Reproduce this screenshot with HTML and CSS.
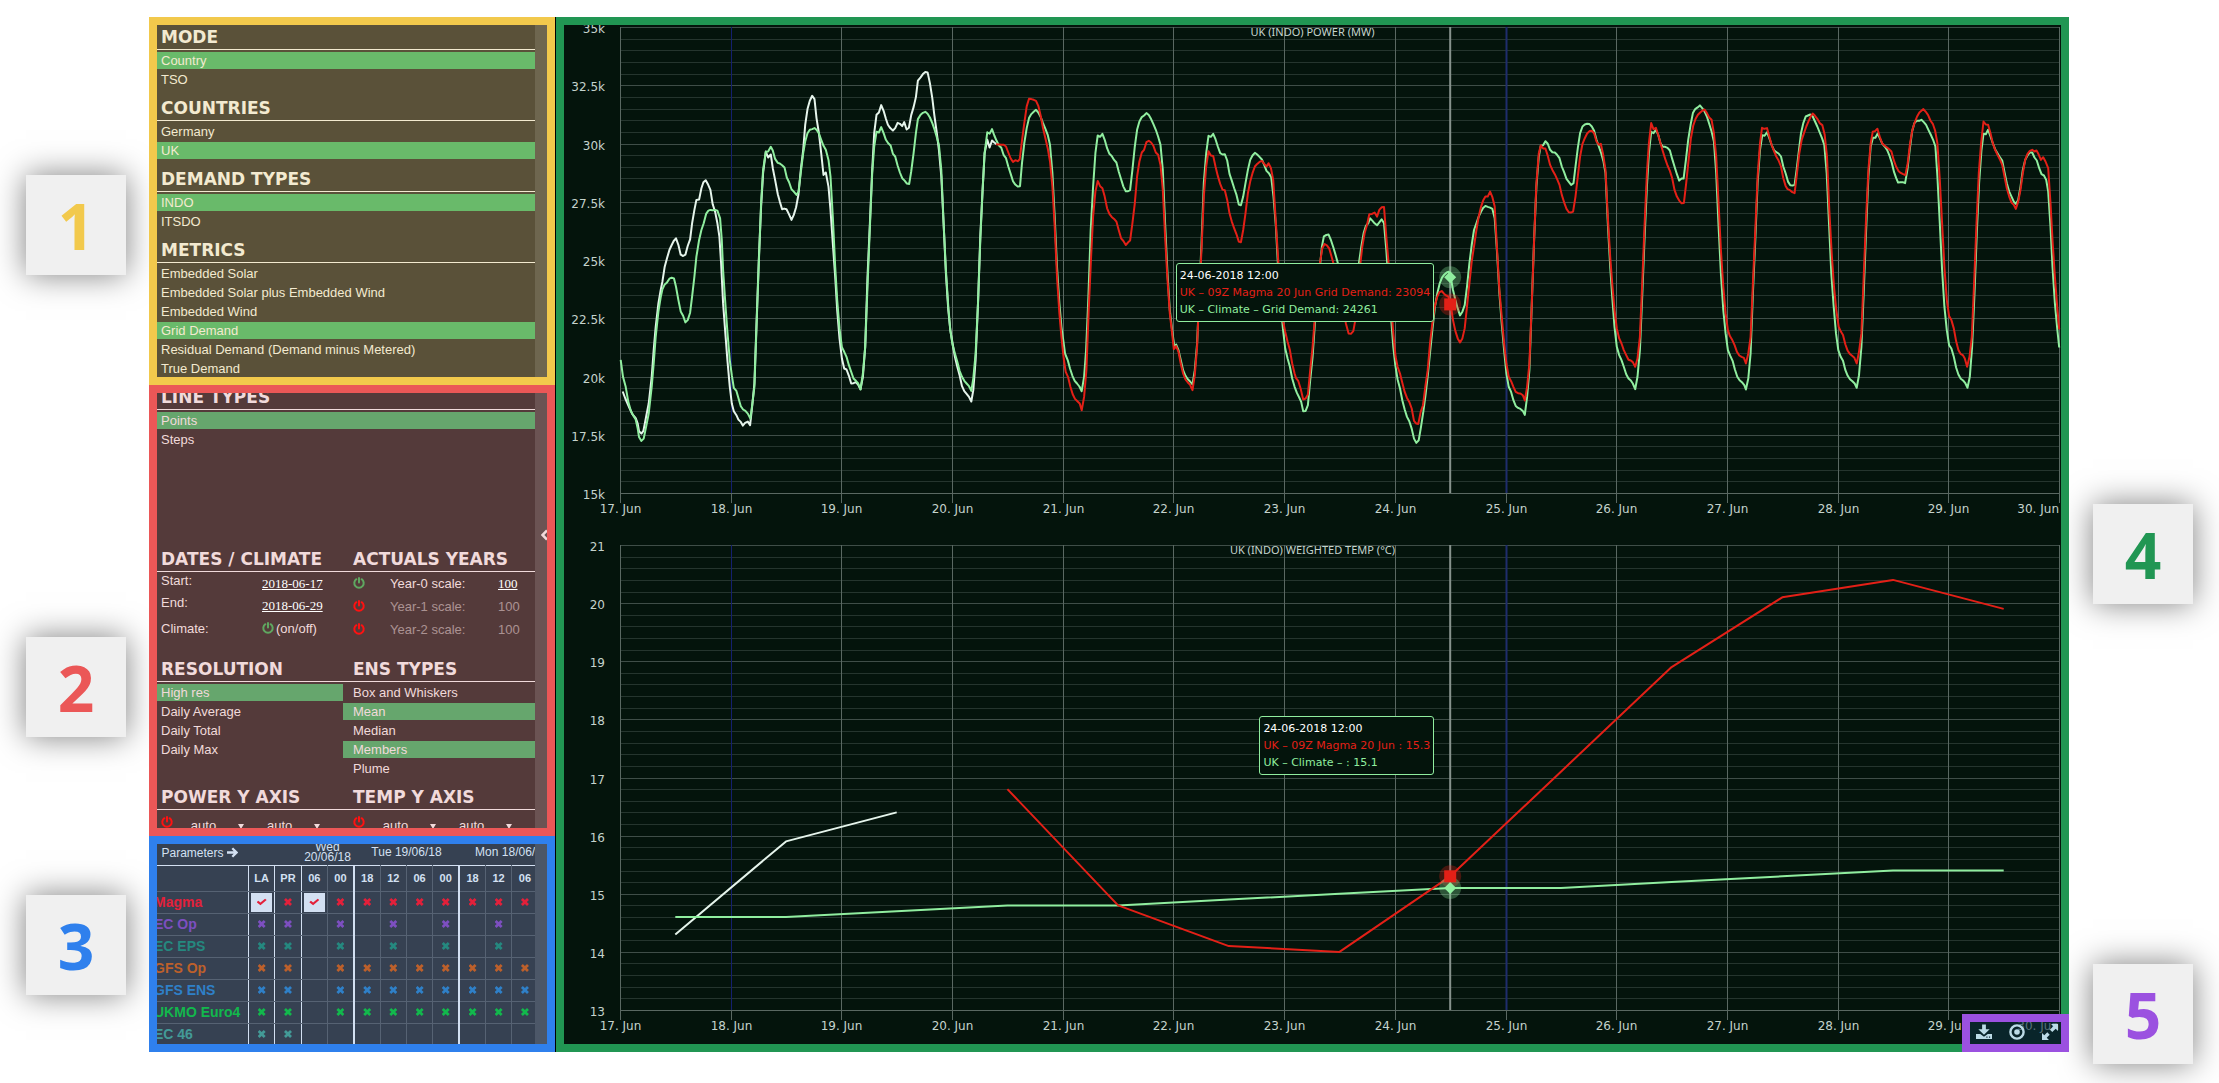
FILE: index.html
```html
<!DOCTYPE html>
<html lang="en">
<head>
<meta charset="utf-8">
<title>UK (INDO) demand forecast</title>
<link rel="stylesheet" href="styles.css">
</head>
<body>
<svg class="sprite" aria-hidden="true">
  <symbol id="power" viewBox="0 0 12 12"><path d="M3.4 2.2a4.7 4.7 0 1 0 5.2 0M6 1v4.6" fill="none" stroke="currentColor" stroke-width="2" stroke-linecap="round"/></symbol>
</svg>
<div class="page">
  <aside class="rail rail-left">
    <div class="badge badge-1">1</div>
    <div class="badge badge-2">2</div>
    <div class="badge badge-3">3</div>
  </aside>

  <main class="app">
    <div class="sidebar">
      <section class="panel panel-yellow">
        <div class="panel-body">
          <div class="group">
            <h2>MODE</h2>
            <button class="item on">Country</button>
            <button class="item">TSO</button>
          </div>
          <div class="group">
            <h2>COUNTRIES</h2>
            <button class="item">Germany</button>
            <button class="item on">UK</button>
          </div>
          <div class="group">
            <h2>DEMAND TYPES</h2>
            <button class="item on">INDO</button>
            <button class="item">ITSDO</button>
          </div>
          <div class="group">
            <h2>METRICS</h2>
            <button class="item">Embedded Solar</button>
            <button class="item">Embedded Solar plus Embedded Wind</button>
            <button class="item">Embedded Wind</button>
            <button class="item on">Grid Demand</button>
            <button class="item">Residual Demand (Demand minus Metered)</button>
            <button class="item">True Demand</button>
          </div>
        </div>
      </section>

      <section class="panel panel-red">
        <div class="panel-body scrolled">
          <div class="group line-types">
            <h2>LINE TYPES</h2>
            <button class="item on">Points</button>
            <button class="item">Steps</button>
          </div>
          <div class="columns">
            <div class="group settings">
              <h2>DATES / CLIMATE</h2>
              <div class="date-row"><span class="raised">Start:</span><a href="#start">2018-06-17</a></div>
              <div class="date-row"><span class="raised">End:</span><a href="#end">2018-06-29</a></div>
              <div class="date-row"><span>Climate:</span><span class="climate"><button class="toggle active" aria-label="Climate"><svg><use href="#power"/></svg></button>(on/off)</span></div>
            </div>
            <div class="group settings">
              <h2>ACTUALS YEARS</h2>
              <div class="year-row current"><button class="toggle active" aria-label="Year-0"><svg><use href="#power"/></svg></button><span>Year-0 scale:</span><a href="#year-0">100</a></div>
              <div class="year-row"><button class="toggle" aria-label="Year-1"><svg><use href="#power"/></svg></button><span>Year-1 scale:</span><span>100</span></div>
              <div class="year-row"><button class="toggle" aria-label="Year-2"><svg><use href="#power"/></svg></button><span>Year-2 scale:</span><span>100</span></div>
            </div>
            <div class="group">
              <h2>RESOLUTION</h2>
              <button class="item on">High res</button>
              <button class="item">Daily Average</button>
              <button class="item">Daily Total</button>
              <button class="item">Daily Max</button>
            </div>
            <div class="group">
              <h2>ENS TYPES</h2>
              <button class="item">Box and Whiskers</button>
              <button class="item on">Mean</button>
              <button class="item">Median</button>
              <button class="item on">Members</button>
              <button class="item">Plume</button>
            </div>
            <div class="group">
              <h2>POWER Y AXIS</h2>
              <div class="axis-row">
                <button class="toggle" aria-label="Power axis"><svg><use href="#power"/></svg></button>
                <label class="select"><select aria-label="Power minimum"><option>auto</option></select></label>
                <label class="select"><select aria-label="Power maximum"><option>auto</option></select></label>
              </div>
            </div>
            <div class="group">
              <h2>TEMP Y AXIS</h2>
              <div class="axis-row">
                <button class="toggle" aria-label="Temperature axis"><svg><use href="#power"/></svg></button>
                <label class="select"><select aria-label="Temperature minimum"><option>auto</option></select></label>
                <label class="select"><select aria-label="Temperature maximum"><option>auto</option></select></label>
              </div>
            </div>
          </div>
        </div>
        <button class="collapse" aria-label="Collapse sidebar"><svg viewBox="0 0 6 12"><path d="M6 1.5 1.5 6 6 10.5" fill="none" stroke="currentColor" stroke-width="2.5"/></svg></button>
      </section>

      <section class="panel panel-blue">
        <div class="panel-body">
          <table class="runs">
            <colgroup><col class="col-name"><col class="col-run"><col class="col-run"><col class="col-run"><col class="col-run"><col class="col-run"><col class="col-run"><col class="col-run"><col class="col-run"><col class="col-run"><col class="col-run"><col class="col-run"><col class="col-run"></colgroup>
            <thead>
              <tr class="days">
                <th class="params" colspan="3">Parameters <svg viewBox="0 0 11 11"><path d="M0 5.5h9M5.3 1.3l4.2 4.2-4.2 4.2" fill="none" stroke="currentColor" stroke-width="2.3"/></svg></th>
                <th colspan="2">Wed<br>20/06/18</th>
                <th colspan="4">Tue 19/06/18</th>
                <th colspan="4">Mon 18/06/18</th>
              </tr>
              <tr class="hours">
                <th class="major"></th><th class="major">LA</th><th class="major">PR</th><th>06</th><th class="day-end">00</th><th>18</th><th>12</th><th>06</th><th class="day-end">00</th><th>18</th><th>12</th><th>06</th><th>00</th>
              </tr>
            </thead>
            <tbody id="runs"></tbody>
          </table>
        </div>
      </section>
    </div>

    <section class="charts">
      <figure class="chart chart-power">
        <svg id="power-chart" class="plot"></svg>
        <div class="tooltip" id="power-tip">
          <div>24-06-2018 12:00</div>
          <div class="forecast">UK – 09Z Magma 20 Jun Grid Demand: 23094</div>
          <div class="climate-line">UK – Climate – Grid Demand: 24261</div>
        </div>
      </figure>
      <figure class="chart chart-temp">
        <svg id="temp-chart" class="plot"></svg>
        <div class="tooltip" id="temp-tip">
          <div>24-06-2018 12:00</div>
          <div class="forecast">UK – 09Z Magma 20 Jun : 15.3</div>
          <div class="climate-line">UK – Climate – : 15.1</div>
        </div>
      </figure>
      <div class="tools">
        <button aria-label="Download"><svg viewBox="0 0 17 16"><path d="M6.5 0h4v5h4l-6 6-6-6h4z"/><path d="M0 10h4.5l4 3 4-3H17v5.5H0z"/><path d="M11 13.4h1.2M13.8 13.4H15" stroke="#0b2530" stroke-width="1.2"/></svg></button>
        <button aria-label="Target"><svg viewBox="0 0 16 16"><circle cx="8" cy="8" r="6.6" fill="none" stroke="currentColor" stroke-width="2.4"/><circle cx="8" cy="8" r="2.8"/></svg></button>
        <button aria-label="Full screen"><svg viewBox="0 0 16 16"><path d="M9 0h7v7l-2.3-2.3-3.4 3.4-2.4-2.4 3.4-3.4zM7 16H0V9l2.3 2.3 3-3 2.4 2.4-3 3z"/></svg></button>
      </div>
    </section>
  </main>

  <aside class="rail rail-right">
    <div class="badge badge-4">4</div>
    <div class="badge badge-5">5</div>
  </aside>
</div>
<script src="charts.js"></script>
</body>
</html>
```

FILE: styles.css
```css
* { box-sizing: border-box; }

body {
  margin: 0;
  background: #fff;
  font: 13px/17px "Liberation Sans", Arial, sans-serif;
}

button, select {
  margin: 0;
  padding: 0;
  border: 0;
  background: none;
  color: inherit;
  font: inherit;
  text-align: left;
}

svg { display: block; fill: currentColor; }
.sprite { position: absolute; width: 0; height: 0; }

.page {
  display: grid;
  grid-template-columns: 149px minmax(0, 1fr) 150px;
  grid-template-rows: minmax(0, 1fr);
  height: 100vh;
  min-height: 700px;
  overflow: hidden;
}

/* numbered badges */
.rail { display: flex; flex-direction: column; }
.rail-left { padding: 175px 0 0 26px; }
.rail-right { padding: 504px 0 0 24px; }
.badge {
  flex: none;
  width: 100px;
  height: 100px;
  background: #f0f0f0;
  box-shadow: 0 0 30px rgba(0, 0, 0, .5);
  font: bold 64px/102px "Open Sans", "Noto Sans", sans-serif;
  text-align: center;
}
.badge-1 { color: #f2c94c; }
.badge-2 { color: #eb5757; margin-top: 362px; }
.badge-3 { color: #2f80ed; margin-top: 158px; }
.badge-4 { color: #219653; }
.badge-5 { color: #9b51e0; margin-top: 360px; }

/* application frame */
.app {
  display: grid;
  grid-template-columns: 406px minmax(0, 1fr);
  grid-template-rows: minmax(0, 1fr);
  gap: 1px;
  min-height: 0;
  margin: 17px 0 31px;
  background: linear-gradient(90deg, #000 415px, transparent 415px);
}
.sidebar {
  display: grid;
  grid-template-rows: minmax(0, 368fr) minmax(0, 451fr) minmax(0, 216fr);
  min-height: 0;
}
.panel { position: relative; border: 8px solid; padding-right: 12px; overflow: hidden; }
.panel-body { height: 100%; overflow: hidden; }
.panel-yellow { border-color: #f2c94c; background: #6e664f; }
.panel-yellow .panel-body { background: #5a5139; color: #f3ead0; }
.panel-yellow .on { background: #69ba6a; }
.panel-red { border-color: #eb5757; background: #6b5353; }
.panel-red .panel-body { background: #543a3a; color: #f1dadb; }
.panel-red .on { background: #66a66d; }
.panel-blue { border-color: #2f80ed; background: #4c5768; }
.panel-blue .panel-body { background: #364152; color: #d3e0f2; }

.group + .group { margin-top: 8px; }
h2 {
  height: 25px;
  margin: 0 0 2px;
  padding-left: 4px;
  border-bottom: 1px solid;
  font: bold 17px/25px "DejaVu Sans", "Arial Black", sans-serif;
  white-space: nowrap;
}
.item { display: block; width: 100%; height: 17px; margin-bottom: 2px; padding-left: 4px; }

.scrolled > .group { margin-top: -8px; }
.line-types { height: 162px; }
.columns { display: grid; grid-template-columns: 186px minmax(0, 1fr); row-gap: 6px; }
.columns .group { margin: 0; }
.columns .group:nth-child(even) > * { padding-left: 10px; }
.settings { height: 104px; }
.settings h2, .axis-row { margin: 0; }

.date-row, .year-row { display: grid; align-items: center; height: 22px; }
.date-row { grid-template-columns: 101px 1fr; padding-left: 4px; }
.date-row:last-child { height: 25px; }
.raised { padding-bottom: 5px; }
.climate { display: flex; gap: 2px; }
.year-row { grid-template-columns: 37px 108px 1fr; height: 23px; }
.year-row span { opacity: .55; }
.year-row.current span { opacity: 1; }
.settings a { justify-self: start; color: #fff; font-family: "Liberation Serif", serif; }
.toggle { color: #f11; }
.toggle.active { color: #5fa760; }
.toggle svg { width: 12px; height: 12px; margin: 2px 0 3px; }

.axis-row { display: flex; height: 36px; padding-left: 4px; }
.axis-row .toggle { width: 31px; height: 20px; }
.select { position: relative; width: 79px; padding-top: 5px; }
.select select { width: 60px; appearance: none; }
.select::after {
  content: "";
  position: absolute;
  top: 12px;
  left: 47px;
  border: 3px solid transparent;
  border-top: 5px solid;
  border-bottom: 0;
}
.collapse { position: absolute; right: 0; top: 136px; color: #f1dadb; }
.collapse svg { width: 6px; height: 12px; }

/* model run table */
.runs { table-layout: fixed; width: 414px; margin: -2px 0 0 -6px; border-collapse: collapse; }
.col-name { width: 97px; }
.runs th, .runs td { padding: 0; text-align: center; overflow: hidden; white-space: nowrap; }
.days { height: 23px; border-bottom: 1px solid #d3e0f2; }
.runs .days th { padding-bottom: 2px; font-size: 12px; line-height: 10px; font-weight: normal; }
.runs .days .params { padding-left: 10px; text-align: left; }
.params svg { display: inline-block; width: 11px; height: 11px; vertical-align: -1px; }
.hours { height: 26px; }
.hours th { border: 1px solid #566273; border-top: 0; font-size: 11px; }
.runs tbody tr { height: 22px; }
.runs tbody th { padding-left: 2px; border: 1px solid #566273; font-size: 14px; text-align: left; }
.runs tbody td { border: 1px solid #566273; }
.runs .major { border-right: 1px solid #d3e0f2; }
.runs .day-end { border-right: 2px solid #d3e0f2; }
.runs input {
  display: grid;
  place-content: center;
  width: 21px;
  height: 19px;
  margin: 0 auto;
  appearance: none;
  color: inherit;
}
.runs input::before {
  content: "";
  width: 8px;
  height: 8px;
  background: currentColor;
  clip-path: polygon(24% 0, 50% 26%, 76% 0, 100% 24%, 74% 50%, 100% 76%, 76% 100%, 50% 74%, 24% 100%, 0 76%, 26% 50%, 0 24%);
}
.runs input:checked { background: #d3e0f2; }
.runs input:checked::before {
  width: 10px;
  height: 8px;
  clip-path: polygon(0 52%, 16% 34%, 38% 56%, 84% 8%, 100% 26%, 38% 92%);
}
.magma { color: #e3203a; }
.ec-op { color: #7d4fc0; }
.ec-eps { color: #25887f; }
.gfs-op { color: #bd602b; }
.gfs-ens { color: #2f80c8; }
.ukmo { color: #12b84c; }
.ec-46 { color: #439a97; }

/* charts */
.charts {
  position: relative;
  display: grid;
  grid-template-rows: minmax(0, 510fr) minmax(0, 509fr);
  min-height: 0;
  border: 8px solid #219653;
  background: #04140c;
  color: #c5d3cc;
  font: 12px/17px "DejaVu Sans", Verdana, sans-serif;
}
.chart { position: relative; margin: 0; min-height: 0; overflow: hidden; }
.plot { position: absolute; width: 100%; height: 100%; }
.plot .title { font: 11px "Noto Sans", "Open Sans", sans-serif; }
.minor { stroke: #25352e; }
.grid-y { stroke: #3f4e48; }
.grid-x { stroke: #5a6862; }
.marker-line { stroke: #1f2d6c; stroke-width: 2; }
.cursor { stroke: #87938d; stroke-width: 2; }
.series { fill: none; stroke-width: 2; stroke-linejoin: round; }
.actual { stroke: #e6f5ec; }
.normal { stroke: #90ee9f; }
.model { stroke: #e32017; }
.halo-normal { fill: #90ee9f; opacity: .3; }
.halo-model { fill: #e32017; opacity: .3; }
.dot-normal { fill: #90ee9f; }
.dot-model { fill: #e32017; }

.tooltip {
  position: absolute;
  padding: 3px;
  border: 1px solid #90ee9f;
  border-radius: 3px;
  background: #04140c;
  color: #fff;
  font-size: 11px;
  white-space: nowrap;
}
.forecast { color: #e32017; }
.climate-line { color: #90ee9f; }

.tools {
  position: absolute;
  right: -8px;
  bottom: -8px;
  display: flex;
  justify-content: space-between;
  width: 107px;
  height: 38px;
  padding: 2px 3px 4px 6px;
  border: 8px solid #9b51e0;
  background: rgba(14, 48, 64, .6);
  background-clip: padding-box;
  color: #bcdbe6;
}
.tools svg { width: 16px; height: 16px; }
```

FILE: charts.js
```js
// Model run availability: x = available, v = selected, . = none
const runs = [
  ["Magma", "magma", "vxvxxxxxxxxx"],
  ["EC Op", "ec-op", "xx.x.x.x.x.x"],
  ["EC EPS", "ec-eps", "xx.x.x.x.x.x"],
  ["GFS Op", "gfs-op", "xx.xxxxxxxxx"],
  ["GFS ENS", "gfs-ens", "xx.xxxxxxxxx"],
  ["UKMO Euro4", "ukmo", "xx.xxxxxxxxx"],
  ["EC 46", "ec-46", "xx.........."]
];
const border = { 0: "major", 1: "major", 3: "day-end", 7: "day-end" };
document.getElementById("runs").innerHTML = runs.map(([name, cls, cells]) =>
  `<tr class="${cls}"><th class="major">${name}</th>` +
  [...cells].map((c, i) => `<td class="${border[i] || ""}">` +
    (c === "." ? "" : `<input type="checkbox" aria-label="${name} run ${i + 1}"${c === "v" ? " checked" : ""}>`) +
    "</td>").join("") + "</tr>").join("");

// Power traces, in blocks of "x,y" samples with the block's x origin.
// A day is 331.8 units wide and 1000 MW is 69.8 units high, with 35k at y = 52.
const A = 211, B = -1318, C = -2818;
const power = {
  actual: [[A, "219,1144 227,1165 240,1195 248,1212 258,1224 264,1240 268,1263 275,1270 281,1262 290,1215 297,1180 306,1100 312,1020 318,950 326,880 333,840 338,815 345,770 352,745 359,720 366,705 372,693 379,685 386,705 393,734 400,738 407,734 414,708 421,688 427,640 434,600 440,570 448,569 455,535 461,517 468,511 475,524 482,540 489,583 496,605 503,640 509,680 514,760 520,880 526,960 533,1050 540,1130 546,1180 552,1203 560,1215 566,1228 573,1235 579,1246 586,1238 594,1234 601,1245 607,1190 614,1120 620,950 627,750 634,590 640,490 648,425 655,443 663,434 669,475 676,510 684,553 690,575 697,598 703,596 710,598 717,612 725,630 732,615 739,592 746,553 753,480 760,420 766,345 773,298 780,273 787,258 794,268 800,325 807,368 814,430 821,495 828,488 836,530 842,600 849,700 856,800 862,900 869,985 876,1045 883,1075 890,1078 897,1097 904,1120 911,1119 918,1116 925,1124 932,1137 939,1100 946,1010 953,800 960,640 967,480 973,370 980,315 987,308 994,286 1001,303 1008,327 1014,345 1021,355 1029,362 1036,355 1043,339 1050,342 1057,349 1063,337 1070,359 1077,354 1084,316 1091,292 1098,262 1104,213 1112,203 1119,193 1126,187 1133,188 1140,220 1147,265 1153,315 1160,365 1167,420 1174,500 1181,640 1188,790 1195,900 1201,960 1208,1000 1215,1040 1222,1070 1229,1095 1236,1128 1243,1143 1250,1151 1257,1160 1264,1174 1270,1140 1277,1050 1284,880 1291,680 1298,540 1304,430 1312,390 1319,413 1326,392 1333,398 1340,403"]],
  normal: [
    [A, "213,1049 220,1100 228,1130 236,1175 244,1203 252,1218 258,1228 264,1255 268,1280 275,1292 282,1285 290,1245 297,1210 306,1130 312,1060 318,980 326,905 333,862 338,838 345,823 352,817 359,806 366,803 373,805 379,830 386,870 393,904 400,917 407,937 414,930 421,908 427,860 434,800 440,740 448,690 455,660 462,640 469,612 476,602 482,600 489,601 496,600 503,602 511,625 516,690 520,780 526,870 533,965 540,1050 546,1095 552,1133 560,1142 566,1163 573,1188 580,1198 587,1202 594,1210 602,1225 608,1180 614,1130 620,960 627,760 634,580 640,480 648,426 655,425 663,411 669,422 676,447 684,459 690,461 697,466 704,473 711,503 718,517 725,538 732,545 740,555 746,545 752,495 760,430 766,395 773,370 780,360 787,358 794,355 800,360 807,370 814,390 821,408 828,420 836,450 842,500 849,620 856,770 862,870 869,955 876,1011 883,1025 890,1040 897,1065 904,1085 911,1105 918,1112 925,1120 932,1138 939,1090 946,1010 953,830 960,650 967,490 973,410 980,366 987,368 994,352 1001,370 1008,390 1015,400 1022,407 1029,432 1036,440 1043,467 1050,488 1057,505 1064,512 1071,521 1078,522 1084,485 1091,430 1098,370 1104,328 1112,315 1119,309 1126,306 1133,312 1140,323 1147,340 1153,357 1160,380 1167,405 1174,480 1181,640 1188,780 1195,890 1201,960 1208,1005 1215,1030 1222,1055 1229,1082 1236,1100 1243,1112 1250,1120 1257,1128 1264,1142 1270,1105 1277,1030 1284,880 1291,690 1298,540 1304,430 1312,367 1319,372 1326,358 1333,377 1340,393 1347,407 1354,414 1361,436 1368,445 1375,470 1382,492 1389,514 1396,524 1403,530 1410,529 1416,460 1423,400 1430,355 1437,325 1444,313 1451,306 1458,300 1465,308 1472,322 1479,340 1486,357 1493,375 1500,405 1507,490 1514,620 1521,770 1528,880 1534,950 1541,1000"],
    [B, "16,1030 24,1050 31,1075 38,1097 45,1112 52,1120 59,1129 66,1143 73,1100 79,1020 86,860 93,660 100,530 107,430 114,377 121,381 128,372 135,390 142,415 149,432 156,438 163,450 170,458 177,485 184,508 191,530 198,544 205,544 211,541 218,480 225,410 232,360 239,335 246,322 253,317 260,310 267,316 274,328 281,343 288,360 295,380 302,405 309,480 316,640 323,790 330,900 337,960 344,1012 349,1003 356,1020 363,1050 370,1080 377,1097 384,1107 391,1114 398,1123 405,1080 412,1000 418,860 425,700 432,520 439,430 446,378 453,381 460,372 467,388 474,410 481,430 488,434 495,433 502,452 509,492 516,512 523,535 530,555 537,584 543,586 550,560 557,520 564,480 571,450 578,437 585,429 592,434 599,441 606,449 613,465 620,483 627,490 634,502 641,560 648,650 655,780 662,880 669,955 676,1015 683,1045 690,1070 697,1105 704,1130 711,1148 718,1162 724,1175 730,1203 737,1202 744,1185 751,1110 758,1040 765,940 772,850 779,780 786,710 792,679 799,675 806,674 813,690 820,712 827,735 834,760 841,785 848,820 855,850 862,880 869,900 876,895 883,880 890,820 897,760 904,710 911,670 918,647 925,640 930,625 937,632 944,640 951,646 958,637 965,628 972,640 979,720 986,820 993,920 1000,1010 1006,1065 1013,1108 1020,1135 1027,1170 1034,1198 1041,1220 1048,1233 1055,1255 1062,1285 1069,1298 1076,1290 1083,1250 1090,1205 1097,1150 1104,1090 1111,1020 1118,950 1125,890 1132,850 1139,820 1146,803 1153,793 1160,787 1166,785 1172,801 1179,840 1186,870 1193,895 1200,916 1207,905 1214,885 1221,830 1228,760 1235,705 1242,660 1249,640 1256,620 1263,605 1269,594 1276,588 1283,591 1290,593 1297,597 1304,625 1311,730 1318,850 1325,940 1332,1020 1339,1090 1346,1130 1353,1145 1360,1170 1367,1187 1374,1193 1381,1196 1388,1202 1394,1214 1401,1160 1408,1080 1415,880 1422,690 1429,530 1436,440 1442,408 1449,406 1456,394 1463,402 1470,420 1477,427 1484,428 1491,435 1498,445 1505,470 1512,487 1519,507 1526,516"],
    [C, "33,525 40,520 46,470 53,415 60,370 67,350 74,344 81,342 88,343 95,350 102,363 109,390 116,410 123,430 130,455 136,490 143,640 150,770 156,860 163,950 170,1010 177,1035 184,1050 191,1070 198,1092 205,1105 212,1111 218,1120 225,1137 232,1100 239,1020 246,860 253,690 260,530 266,430 273,366 280,370 287,360 294,375 301,400 308,411 315,411 322,414 329,422 336,447 343,470 350,493 357,512 364,506 370,506 377,450 384,390 391,345 398,310 405,298 412,293 419,287 426,295 433,305 440,320 447,342 454,365 461,395 468,490 475,650 482,790 489,900 496,970 503,1020 510,1037 517,1052 524,1078 531,1100 538,1110 545,1116 552,1125 557,1138 564,1105 571,1030 578,850 585,690 592,520 599,420 606,376 613,378 620,367 627,385 634,405 641,421 648,427 655,431 662,440 669,470 676,490 683,515 690,526 697,527 703,525 709,480 716,420 722,370 729,340 736,320 743,317 750,314 757,320 764,335 771,350 778,368 785,385 792,405 799,490 806,640 813,790 820,890 827,970 834,1020 841,1040 848,1052 855,1080 862,1097 869,1107 876,1113 883,1120 889,1133 896,1095 903,1010 910,850 917,670 924,500 931,410 938,384 945,384 952,371 959,387 966,402 973,410 980,420 987,437 994,458 1001,487 1007,504 1013,518 1020,517 1027,517 1034,520 1041,480 1048,420 1055,365 1062,340 1069,333 1076,333 1083,330 1090,337 1097,345 1104,360 1111,375 1118,390 1125,410 1131,500 1138,640 1145,780 1152,890 1159,960 1166,1005 1173,1015 1180,1040 1187,1072 1194,1093 1201,1106 1208,1111 1214,1118 1221,1133 1228,1100 1235,1010 1242,850 1249,670 1256,520 1263,420 1269,372 1276,373 1283,360 1290,380 1297,400 1304,418 1311,430 1318,442 1325,452 1332,487 1339,520 1346,545 1353,560 1360,575 1366,582 1373,570 1380,530 1387,480 1394,450 1401,437 1408,428 1415,428 1422,443 1429,452 1436,475 1443,493 1450,497 1457,510 1463,545 1470,650 1476,770 1483,880 1490,955 1496,1012"]
  ],
  model: [
    [A, "1338,403 1347,404 1354,405 1361,405 1368,410 1375,428 1382,446 1389,456 1396,451 1403,454 1409,448 1416,392 1423,340 1430,290 1437,267 1444,268 1451,270 1458,273 1465,288 1472,318 1479,355 1486,385 1493,415 1500,455 1507,530 1514,650 1521,800 1528,910 1534,980 1541,1045"],
    [B, "18,1085 25,1100 32,1130 39,1152 46,1166 53,1173 60,1180 66,1200 73,1160 80,1080 87,900 94,740 100,620 107,545 114,513 121,529 128,535 135,560 142,595 149,612 156,621 163,627 170,635 177,660 184,685 191,693 198,705 205,697 211,692 218,640 225,580 232,500 239,455 246,428 253,420 260,397 267,393 274,398 281,408 288,428 295,435 302,465 309,540 316,680 323,810 330,910 337,970 342,1017 349,1008 356,1025 363,1062 370,1090 377,1108 384,1117 391,1124 398,1140 405,1095 412,1010 418,860 425,720 432,560 439,470 446,424 453,437 460,438 467,470 474,498 481,522 488,539 495,541 502,570 509,610 516,635 523,655 530,673 537,695 543,697 550,660 557,610 564,550 571,515 578,490 585,470 592,462 599,456 606,453 613,462 620,470 626,460 633,474 640,510 647,620 655,750 662,860 669,930 676,965 683,995 690,1020 697,1060 704,1090 708,1103 715,1112 722,1135 730,1168 737,1165 744,1153 751,1080 758,1010 765,920 772,830 780,760 787,715 794,702 801,706 808,716 815,740 822,765 829,800 836,840 843,870 850,905 858,940 866,970 873,971 880,963 886,930 893,840 900,770 907,710 914,670 921,645 928,613 936,612 944,608 951,620 958,600 965,592 972,591 979,680 986,760 993,880 1000,970 1007,1040 1013,1070 1020,1090 1027,1118 1034,1145 1041,1163 1048,1175 1055,1195 1062,1232 1069,1240 1075,1241 1082,1205 1089,1185 1096,1130 1103,1080 1110,1000 1117,940 1124,890 1131,862 1138,847 1145,843 1152,851 1159,857 1165,860 1172,884 1179,930 1186,963 1193,985 1200,997 1207,985 1214,955 1221,890 1228,820 1235,755 1242,710 1249,660 1256,620 1263,590 1270,570 1276,560 1283,560 1290,545 1297,562 1304,590 1311,720 1318,840 1325,920 1332,1000 1339,1060 1346,1100 1353,1113 1360,1130 1367,1145 1374,1149 1381,1150 1388,1155 1394,1171 1401,1130 1408,1060 1415,880 1422,690 1429,520 1436,430 1442,406 1449,416 1456,416 1463,438 1470,465 1477,480 1484,493 1491,508 1498,525 1505,555 1512,577 1519,597 1526,607"],
    [C, "32,608 39,605 46,560 53,500 60,440 67,402 74,385 81,371 88,364 95,363 102,370 109,395 116,405 122,402 129,435 136,480 143,620 150,740 156,820 163,900 170,955 177,985 184,1000 191,1020 198,1035 205,1049 212,1051 218,1056 225,1070 232,1045 239,980 246,820 253,650 260,490 266,400 273,340 280,358 287,354 294,375 301,400 308,425 315,447 322,467 329,483 336,505 343,540 350,560 357,572 364,580 371,579 378,520 385,450 392,385 399,348 406,327 413,315 420,308 427,302 433,299 440,310 447,323 454,330 461,370 468,440 475,580 482,720 489,830 496,910 503,960 509,978 516,990 523,1005 530,1025 537,1036 544,1040 551,1043 557,1060 564,1030 571,980 578,820 585,660 592,500 599,400 605,354 612,357 620,355 627,380 634,405 641,424 648,440 655,452 662,470 669,505 676,528 682,538 689,541 696,547 703,550 710,490 717,430 724,390 731,370 738,350 745,333 751,320 757,311 764,318 771,327 778,340 786,346 793,375 800,440 807,600 814,730 821,830 828,900 835,950 842,965 848,975 855,1003 862,1022 869,1032 876,1038 882,1043 889,1060 896,1025 903,970 910,800 917,630 924,480 931,400 937,366 944,364 951,357 958,380 965,400 972,407 979,412 986,418 993,425 1000,450 1007,470 1014,483 1021,489 1028,493 1035,496 1042,460 1049,400 1056,360 1063,338 1070,320 1077,308 1083,303 1089,298 1096,306 1103,316 1110,332 1117,342 1124,362 1131,400 1138,510 1145,640 1152,770 1159,870 1166,918 1173,930 1180,955 1187,993 1194,1020 1200,1031 1207,1035 1213,1045 1220,1070 1227,1040 1234,980 1241,820 1248,640 1255,490 1262,400 1269,335 1276,344 1283,345 1290,370 1297,400 1304,420 1311,435 1318,448 1325,465 1332,500 1339,535 1346,560 1353,578 1360,585 1366,597 1373,575 1380,540 1387,490 1394,450 1401,432 1408,423 1415,420 1422,425 1428,422 1435,435 1441,450 1448,442 1455,455 1463,475 1470,580 1476,690 1483,800 1490,890 1496,958"]
  ]
};
const powerPoints = blocks => blocks.flatMap(([x0, text]) => text.split(" ").map(pair => {
  const [x, y] = pair.split(",").map(Number);
  return [(x - x0) / 331.8, 35 - (y - 52) / 69.8];
}));

// Daily temperatures sit at midday, starting from the given day.
const daily = (first, values) => values.map((v, i) => [first + i + 0.5, v]);

const charts = [
  {
    svg: "power-chart", tip: "power-tip", tipTop: 238, title: "UK (INDO) POWER (MW)",
    min: 15, max: 35, major: 2.5, minor: 0.5, unit: "k", top: 2, bottom: 42,
    actual: powerPoints(power.actual), normal: powerPoints(power.normal), model: powerPoints(power.model),
    normalAt: 24.261, modelAt: 23.094
  },
  {
    svg: "temp-chart", tip: "temp-tip", tipTop: 181, title: "UK (INDO) WEIGHTED TEMP (°C)",
    min: 13, max: 21, major: 1, minor: 0.2, unit: "", top: 10, bottom: 34,
    actual: daily(0, [14.3, 15.9, 16.4]),
    normal: daily(0, [14.6, 14.6, 14.7, 14.8, 14.8, 14.9, 15, 15.1, 15.1, 15.2, 15.3, 15.4, 15.4]),
    model: daily(3, [16.8, 14.8, 14.1, 14, 15.3, 17.1, 18.9, 20.1, 20.4, 19.9]),
    normalAt: 15.1, modelAt: 15.3
  }
];

function draw(c) {
  const svg = document.getElementById(c.svg);
  const w = svg.parentNode.clientWidth, h = svg.parentNode.clientHeight;
  const left = 56, right = w - 2, bottom = h - c.bottom;
  const x = d => left + (right - left) * d / 13;
  const y = v => bottom - (bottom - c.top) * (v - c.min) / (c.max - c.min);
  const snap = v => Math.round(v) + 0.5;
  const line = (cls, x1, y1, x2, y2) => `<line class="${cls}" x1="${x1}" y1="${y1}" x2="${x2}" y2="${y2}"/>`;
  const text = (s, tx, ty, anchor) => `<text x="${tx}" y="${ty}" text-anchor="${anchor}">${s}</text>`;
  let out = "";
  const steps = Math.round((c.max - c.min) / c.minor), per = Math.round(c.major / c.minor);
  for (let i = 0; i <= steps; i++) {
    const v = c.min + i * c.minor, gy = snap(y(v)), isMajor = i % per === 0;
    out += line(i === 0 ? "grid-x" : isMajor ? "grid-y" : "minor", left, gy, right, gy);
    if (isMajor) out += text(+v.toFixed(1) + c.unit, 41, gy + 5, "end");
  }
  for (let d = 0; d <= 13; d++) {
    const gx = snap(x(d));
    out += line("grid-x", gx, c.top, gx, bottom + 10);
    if (d === 1) out += `<line x1="${gx}" y1="${c.top}" x2="${gx}" y2="${bottom}" stroke="#14206e"/>`;
    if (d === 8) out += line("marker-line", gx, c.top, gx, bottom);
    out += d < 13 ? text(17 + d + ". Jun", gx, bottom + 20, "middle") : text("30. Jun", w - 2, bottom + 20, "end");
  }
  out += `<text class="title" x="${w / 2}" y="${c.top + 9}" text-anchor="middle">${c.title}</text>`;
  const cx = x(7.5);
  out += line("cursor", cx, c.top, cx, bottom);
  for (const name of ["actual", "normal", "model"]) {
    out += `<polyline class="series ${name}" points="${c[name].map(p => x(p[0]).toFixed(1) + "," + y(p[1]).toFixed(1)).join(" ")}"/>`;
  }
  const ny = y(c.normalAt), my = y(c.modelAt);
  out += `<circle class="halo-model" cx="${cx}" cy="${my}" r="11"/><circle class="halo-normal" cx="${cx}" cy="${ny}" r="11"/>`;
  out += `<path class="dot-normal" d="M${cx} ${ny - 6}l6 6-6 6-6-6z"/><rect class="dot-model" x="${cx - 6}" y="${my - 6}" width="12" height="12"/>`;
  svg.innerHTML = out;
  const tip = document.getElementById(c.tip);
  tip.style.right = w - cx + 16 + "px";
  tip.style.top = c.tipTop + "px";
}

const drawAll = () => charts.forEach(draw);
drawAll();
addEventListener("resize", drawAll);
```
